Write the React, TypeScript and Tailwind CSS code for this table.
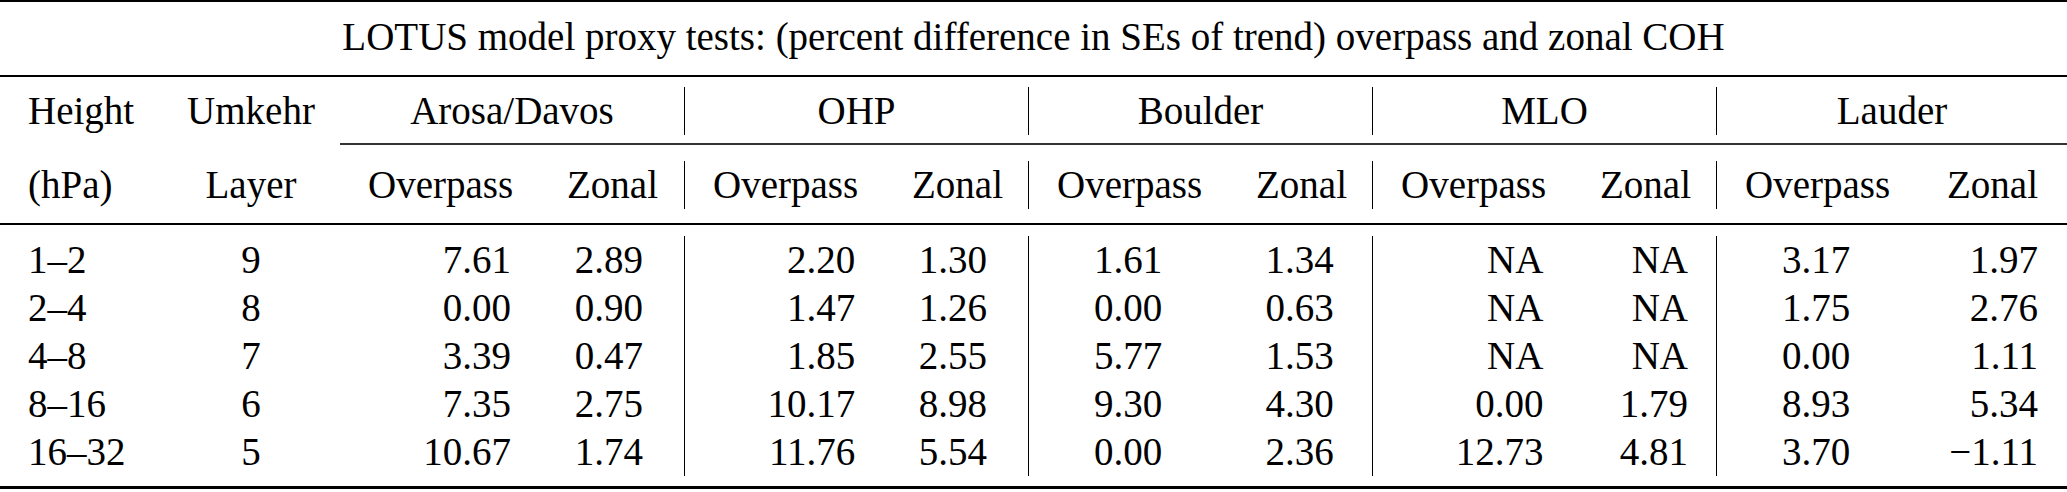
import React from "react";

interface Group {
  name: string;
  over: string[];
  zonal: string[];
  overAlign: string;
  zonalAlign: string;
  width: string;
  overW: string;
  zonalW: string;
  border: string;
}

const groups: Group[] = [
  {
    name: "Arosa/Davos",
    over: ["7.61", "0.00", "3.39", "7.35", "10.67"],
    zonal: ["2.89", "0.90", "0.47", "2.75", "1.74"],
    overAlign: "text-right pl-[28px] pr-[29px]",
    zonalAlign: "text-right pl-[27px] pr-[41px]",
    width: "w-[344px]",
    overW: "w-[200px]",
    zonalW: "w-[144px]",
    border: "",
  },
  {
    name: "OHP",
    over: ["2.20", "1.47", "1.85", "10.17", "11.76"],
    zonal: ["1.30", "1.26", "2.55", "8.98", "5.54"],
    overAlign: "text-right pl-[28px] pr-[29px]",
    zonalAlign: "text-right pl-[27px] pr-[41px]",
    width: "w-[344px]",
    overW: "w-[200px]",
    zonalW: "w-[144px]",
    border: "border-l-[1.5px] border-black",
  },
  {
    name: "Boulder",
    over: ["1.61", "0.00", "5.77", "9.30", "0.00"],
    zonal: ["1.34", "0.63", "1.53", "4.30", "2.36"],
    overAlign: "text-center pl-[28px] pr-[29px]",
    zonalAlign: "text-center pl-[27px] pr-[28px]",
    width: "w-[344px]",
    overW: "w-[200px]",
    zonalW: "w-[144px]",
    border: "border-l-[1.5px] border-black",
  },
  {
    name: "MLO",
    over: ["NA", "NA", "NA", "0.00", "12.73"],
    zonal: ["NA", "NA", "NA", "1.79", "4.81"],
    overAlign: "text-right pl-[28px] pr-[29px]",
    zonalAlign: "text-right pl-[27px] pr-[28px]",
    width: "w-[344px]",
    overW: "w-[200px]",
    zonalW: "w-[144px]",
    border: "border-l-[1.5px] border-black",
  },
  {
    name: "Lauder",
    over: ["3.17", "1.75", "0.00", "8.93", "3.70"],
    zonal: ["1.97", "2.76", "1.11", "5.34", "\u22121.11"],
    overAlign: "text-center pl-[28px] pr-[29px]",
    zonalAlign: "text-right pl-[27px] pr-[29px]",
    width: "w-[351px]",
    overW: "w-[200px]",
    zonalW: "w-[151px]",
    border: "border-l-[1.5px] border-black",
  },
];

const heights = ["1\u20132", "2\u20134", "4\u20138", "8\u201316", "16\u201332"];
const layers = ["9", "8", "7", "6", "5"];

export default function App() {
  return (
    <div className="w-[2067px] h-[492px] bg-white text-black font-['Liberation_Serif','Times_New_Roman',serif] text-[39px] leading-[48px]">
      <div className="h-[2px] bg-black" />
      <div className="h-[73px] pt-[11px] text-center">
        LOTUS model proxy tests: (percent difference in SEs of trend) overpass and zonal COH
      </div>
      <div className="h-[2px] bg-black" />

      {/* header row 1 */}
      <div className="flex h-[66px] pt-[10px]">
        <div className="w-[162px] pl-[28px]">Height</div>
        <div className="w-[178px] text-center">Umkehr</div>
        {groups.map((g) => (
          <div key={g.name} className={`${g.width} ${g.border} h-[48px] text-center`}>
            {g.name}
          </div>
        ))}
      </div>

      {/* cmidrule */}
      <div className="flex h-[2px]">
        <div className="w-[340px]" />
        <div className="flex-1 bg-[#333]" />
      </div>

      {/* header row 2 */}
      <div className="flex h-[78px] pt-[16px]">
        <div className="w-[162px] pl-[28px]">(hPa)</div>
        <div className="w-[178px] text-center">Layer</div>
        {groups.map((g) => (
          <div key={g.name} className={`${g.width} ${g.border} h-[48px] flex`}>
            <div className={`${g.overW} pl-[28px] pr-[27px] text-center`}>Overpass</div>
            <div className={`${g.zonalW} pl-[27px] pr-[29px] text-right`}>Zonal</div>
          </div>
        ))}
      </div>

      <div className="h-[2px] bg-black" />

      {/* data */}
      <div className="flex h-[261px] pt-[11px]">
        <div className="w-[162px] pl-[28px]">
          {heights.map((h) => (
            <div key={h}>{h}</div>
          ))}
        </div>
        <div className="w-[178px] text-center">
          {layers.map((l) => (
            <div key={l}>{l}</div>
          ))}
        </div>
        {groups.map((g) => (
          <div key={g.name} className={`${g.width} ${g.border} h-[240px] flex`}>
            <div className={`${g.overW} ${g.overAlign}`}>
              {g.over.map((v, i) => (
                <div key={i}>{v}</div>
              ))}
            </div>
            <div className={`${g.zonalW} ${g.zonalAlign}`}>
              {g.zonal.map((v, i) => (
                <div key={i}>{v}</div>
              ))}
            </div>
          </div>
        ))}
      </div>

      <div className="h-[3px] bg-black" />
    </div>
  );
}
